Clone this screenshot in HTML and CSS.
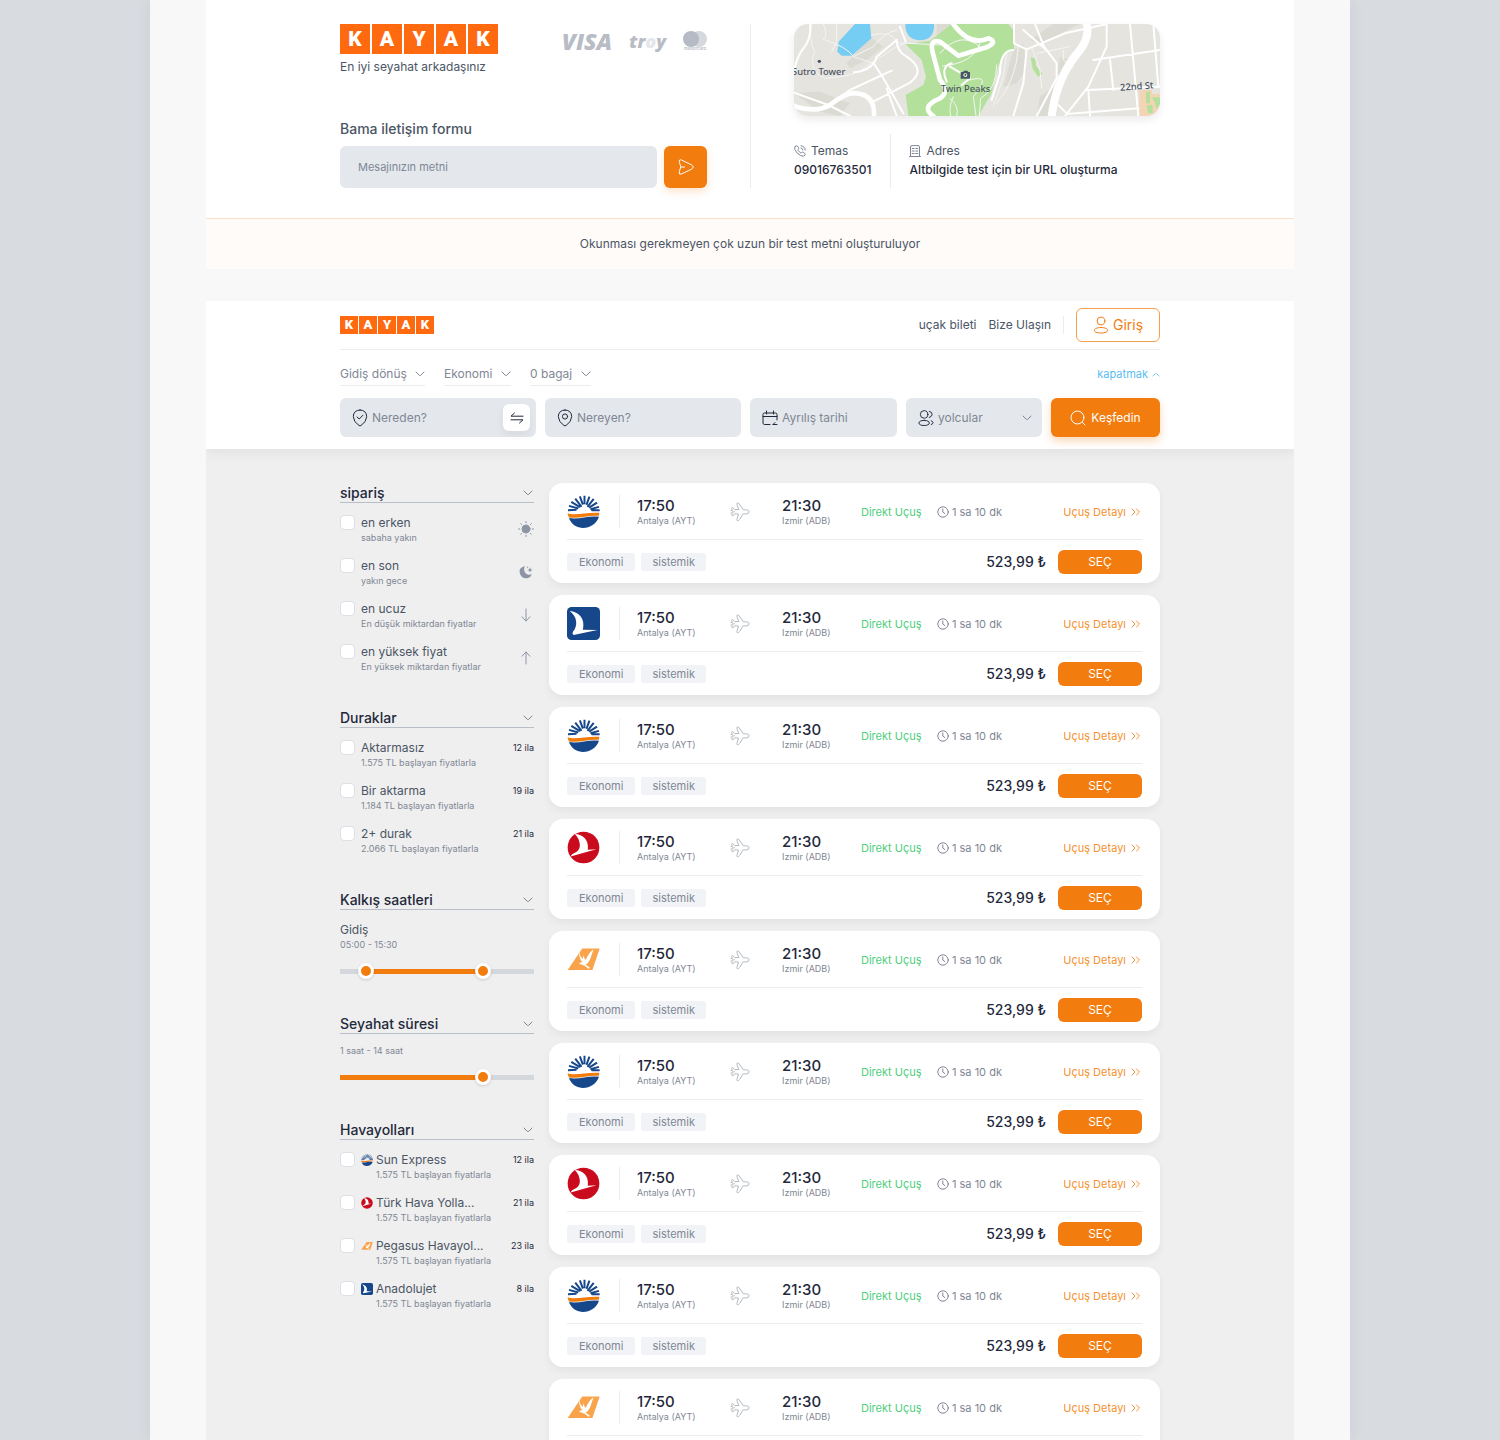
FILE: index.html
```html
<!DOCTYPE html>
<html lang="tr">
<head>
<meta charset="utf-8">
<meta name="viewport" content="width=device-width, initial-scale=1">
<title>KAYAK</title>
<link rel="stylesheet" href="styles.css">
</head>
<body>
<svg class="sprite" aria-hidden="true">
  <symbol id="chevron" viewBox="0 0 10 6"><path d="M1 1 4.3 4.3Q5 5 5.7 4.3L9 1"/></symbol>
  <symbol id="chevron-up" viewBox="0 0 10 6"><path d="M1 5 4.3 1.7Q5 1 5.7 1.7L9 5"/></symbol>
  <symbol id="double" viewBox="0 0 10 8"><path d="M1 1l3 3-3 3M5.500 1l3 3-3 3"/></symbol>
  <symbol id="clock" viewBox="0 0 12 12"><circle cx="6" cy="6" r="5.2"/><path d="M5.800 3v3l2 1.500"/></symbol>
  <symbol id="plane" viewBox="0 0 20 20"><path d="M8.700 7.500 6.900 2.300Q6.600.8 7.900.9q.9.100 1.500 1.200L13.100 7.800h3.700q2.200.3 2.200 2t-2.200 2.100h-3.700l-3.700 5.700q-.8 1.300-1.700 1.200-1.200-.1-.8-1.500l1.700-5.200-4-.2-1.500 2-.3 0q-1.300 0-1-1.200l.6-1.700-1.500-.1M1 8.500l1.400-.1-.7-1.900q-.2-1 1-1l1.900 2.100 4.100-.1M2.500 9.900h2"/></symbol>
  <symbol id="sun-express" viewBox="0 0 100 100">
    <path fill="none" stroke="#17478b" stroke-width="6" d="M3 46l26-1M6 33l28 8M13 21l26 16M25 11l19 25M39 4l9 25M53 2v26M68 5l-9 25M81 12 62 36M91 23 67 38M97 36l-26 7M99 46H74"/>
    <path fill="#f07c0e" d="M2 55C25 64 60 51 98 54l-1 9C63 60 40 73 6 68Q2 62 2 55Z"/>
    <path fill="#17478b" d="M6 70C40 75 64 61 97 66 83 109 20 112 6 70Z"/>
  </symbol>
  <symbol id="turkish" viewBox="0 0 100 100">
    <circle cx="50" cy="50" r="48" fill="#ca0a1d"/>
    <path fill="#fff" d="M24 9C48 10 67 26 63 57L89 55 11 77Q13 70 24 66C44 59 44 30 24 9Z"/>
  </symbol>
  <symbol id="anadolu" viewBox="0 0 100 100">
    <rect width="100" height="100" rx="14" fill="#17478b"/>
    <path fill="#fff" d="M8 12C36 15 56 34 48 69L92 70 20 85Q14 81 18 75C34 57 31 28 8 12Z"/>
  </symbol>
  <symbol id="pegasus" viewBox="0 0 100 100">
    <path fill="#f9a44b" d="M46 17H99L77 82H2Z"/>
    <path fill="#fff" d="M37 20q0 20 10 28L51 37q1 12 6 14Q67 27 81 20 76 30 72 45 63 65 56 66l13 8-3 5-12-10-17-6q3-7 10-4Q34 46 37 20Z"/>
  </symbol>
</svg>

<main class="board">
  <footer class="contact">
    <div class="contact-grid">
      <section class="contact-left">
        <div class="brand-row">
          <div>
            <a class="kayak kayak-large" href="#" aria-label="KAYAK"><span>K</span><span>A</span><span>Y</span><span>A</span><span>K</span></a>
            <p class="slogan">En iyi seyahat arkadaşınız</p>
          </div>
          <div class="payments">
            <span class="visa">VISA</span>
            <span class="troy">tr<span>o</span>y</span>
            <svg class="mastercard" viewBox="0 0 24 20" aria-label="mastercard"><circle cx="16" cy="8" r="8" fill="#d5d8dd"/><circle cx="8" cy="8" r="8" fill="#b5bac4"/><text x="12" y="19" text-anchor="middle">mastercard</text></svg>
          </div>
        </div>
        <form class="message">
          <label for="message">Bama iletişim formu</label>
          <div class="message-row">
            <input id="message" type="text" placeholder="Mesajınızın metni">
            <button type="button" aria-label="Gönder"><svg viewBox="0 0 16 16"><path d="M1.300 3.200Q.6.100 3.500 1L13.500 5.800Q17 8 13.500 10.200L3.500 15Q.6 15.900 1.300 12.800L2.700 8ZM2.700 8H6.500"/></svg></button>
          </div>
        </form>
      </section>
      <section class="contact-right">
        <svg class="map" viewBox="162 42 1098 276" preserveAspectRatio="xMidYMid slice" role="img" aria-label="Harita">
          <rect x="162" y="42" width="1098" height="276" fill="#e5e4df"/>
          <g fill="#dbdbd3"><path d="M392 80 430 110 380 150 330 175 320 160Z"/><path d="M162 250 240 245 330 280 300 318 240 305Z"/><path d="M590 42 640 42 620 80 590 90Z"/><path d="M820 120 850 100 860 180 830 220 790 230Z"/><path d="M940 42 1020 42 900 100 870 90Z"/><path d="M960 140 990 150 970 200 950 190Z"/><path d="M900 260 940 230 930 318 890 318Z"/></g>
          <path fill="#b3e19c" d="M635 42H805L822 62V120Q780 130 770 190L755 250 715 318H505L497 255 550 225 558 200 545 150 497 103 570 92 600 70Z"/>
          <path fill="#b3e19c" d="M872 142l14 4 2 22 20 24-14 8-16-24Z"/>
          <path fill="#76cdf4" d="M345 42H390L394 85 335 137H305L292 125 296 95Z"/>
          <path fill="#76cdf4" d="M496 42H582Q585 90 538 91 496 88 496 42Z"/>
          <path fill="#f3d5b5" d="M1198 240h38v12h24v66h-62Z"/><path fill="#b3e19c" d="M1218 245h12v35h-12ZM1236 262h24v20l-10 15-6-20ZM1220 286h18v24h-14Z"/>
          <g class="lanes"><path d="M215 42Q205 95 225 125 210 150 225 185L255 205Q350 200 385 165L470 110 497 100"/><path d="M250 42Q265 75 250 90M290 42V95L275 125M255 90Q320 110 340 140L400 110Q430 70 470 60M395 75Q460 60 470 98L600 105M340 140 400 160M600 130Q660 60 720 110M608 168Q700 160 720 100M690 210Q760 190 700 260L708 318M718 318 722 265Q770 240 770 165M630 265Q660 290 650 318M640 260Q625 290 632 318M800 130 790 200 760 290M835 110Q830 210 770 280M875 110 900 180 905 235M970 120V150L1000 175M890 130 990 110"/></g>
          <g class="roads"><path d="M210 42Q215 85 190 115 170 140 162 185M162 248 265 285 330 318M265 285 330 240 455 182M342 187Q400 180 410 140L470 90M470 90Q470 125 500 140 560 180 510 218L400 275M400 158 430 205 490 310M440 235 470 318M480 50 497 95M635 160Q600 170 620 215M630 170 690 205 665 225M822 42V100L860 118 975 70 1100 42M885 42 912 110 950 160V205L890 318M850 60 925 125M1100 42V110L1045 230 975 318M1060 150 1260 120M1110 150 1120 240M1040 240 1260 230M1170 42 1195 318M1240 42 1255 230M980 312 1195 295M1045 240 1050 318M955 285 980 310M820 120Q780 120 780 190L755 270M860 118 850 220 820 318"/></g>
          <g class="avenues"><path d="M162 288Q230 310 270 285 320 245 350 250 405 255 402 318"/><path d="M640 42Q690 110 745 85 775 95 740 112L655 137 600 95Q565 85 580 135L600 210Q630 245 600 265 540 290 580 318"/></g>
          <path class="highway" d="M1040 42Q1050 80 1020 120 950 200 935 318"/>
          <circle cx="238" cy="154" r="5" fill="#4b5565"/>
          <path fill="#4b5565" d="M662 186h7l3-4h10l3 4h5v20h-28ZM676 189a6 6 0 1 0 .1 0Z"/><circle cx="676" cy="195" r="3" fill="#4b5565"/>
          <g class="places"><text x="156" y="195">Sutro Tower</text><text x="602" y="245">Twin Peaks</text><text x="1141" y="242" transform="rotate(-4 1141 242)">22nd St</text></g>
        </svg>
        <div class="details">
          <div class="detail">
            <h3><svg viewBox="0 0 12 12"><path d="M1.200 1.500Q2.500.1 3.500 1.100L4.700 2.800Q5 3.500 4.200 4.300q-.5.600 0 1.300l2 2q.8.600 1.400 0 .8-.8 1.500-.4l1.700 1.200q1 .7.100 1.800-1.300 1.900-4.300.3Q2.400 8.300.8 4.500.3 2.600 1.200 1.500ZM7 3q1.800.2 2 2M7 .8Q11 1.200 11.200 5"/></svg>Temas</h3>
            <p>09016763501</p>
          </div>
          <div class="detail">
            <h3><svg viewBox="0 0 12 12"><path d="M.5 11.500h11M1.500 11.500V2Q1.500.6 3 .6h6q1.500 0 1.500 1.400v9.500M3.200 3.500h2M3.200 6h2M3.200 8.500h2M6.800 3.500h2M6.800 6h2M6.800 8.500h2"/></svg>Adres</h3>
            <p>Altbilgide test için bir URL oluşturma</p>
          </div>
        </div>
      </section>
    </div>
    <p class="notice">Okunması gerekmeyen çok uzun bir test metni oluşturuluyor</p>
  </footer>

  <div class="app">
    <header class="header">
      <div class="container">
        <div class="topbar">
          <a class="kayak kayak-small" href="#" aria-label="KAYAK"><span>K</span><span>A</span><span>Y</span><span>A</span><span>K</span></a>
          <nav>
            <a href="#">uçak bileti</a>
            <a href="#">Bize Ulaşın</a>
            <span class="separator"></span>
            <button class="login" type="button"><svg viewBox="0 0 16 18"><circle cx="8" cy="5" r="3.900"/><path d="M8 11.500c9 0 9 5.500 0 5.500s-9-5.500 0-5.500Z"/></svg>Giriş</button>
          </nav>
        </div>
        <div class="options">
          <div class="option"><select aria-label="Yolculuk türü"><option>Gidiş dönüş</option></select><svg class="chevron"><use href="#chevron"/></svg></div>
          <div class="option"><select aria-label="Sınıf"><option>Ekonomi</option></select><svg class="chevron"><use href="#chevron"/></svg></div>
          <div class="option"><select aria-label="Bagaj"><option>0 bagaj</option></select><svg class="chevron"><use href="#chevron"/></svg></div>
          <button class="collapse" type="button">kapatmak<svg><use href="#chevron-up"/></svg></button>
        </div>
        <form class="search">
          <div class="field">
            <svg viewBox="0 0 16 18"><path d="M8 1Q14.500 1.300 14.700 7.500 14.500 13 9 16.500 8 17.200 7 16.500 1.500 13 1.300 7.500 1.500 1.300 8 1ZM5 8l2.200 2L11 6.200"/></svg>
            <input type="text" placeholder="Nereden?" aria-label="Nereden">
            <button class="swap" type="button" aria-label="Değiştir"><svg viewBox="0 0 14 12"><path d="M13 4.200H1L4.500 1M1 7.800h12L9.500 11"/></svg></button>
          </div>
          <div class="field">
            <svg viewBox="0 0 16 18"><path d="M8 1Q14.500 1.300 14.700 7.500 14.500 13 9 16.500 8 17.200 7 16.500 1.500 13 1.300 7.500 1.500 1.300 8 1Z"/><circle cx="8" cy="7.500" r="2.600"/></svg>
            <input type="text" placeholder="Nereyen?" aria-label="Nereye">
          </div>
          <div class="field">
            <svg viewBox="0 0 16 16"><path d="M8 14.500H2.500Q1 14.500 1 13V4.500Q1 3 2.500 3h11Q15 3 15 4.500V10M1 6.500h14M4.500 1v3M11.500 1v3M15 14.500h-4l2-2M11 14.500h3.500"/></svg>
            <input type="text" placeholder="Ayrılış tarihi" aria-label="Ayrılış tarihi">
          </div>
          <div class="field">
            <svg viewBox="0 0 17 18"><circle cx="6.500" cy="5.200" r="4"/><path d="M6.500 11.500c7.500 0 7.500 5.500 0 5.500s-7.500-5.500 0-5.500ZM12 2q3 .5 3 3t-3 3.500M14 12q2 .6 2 2t-2 2"/></svg>
            <select aria-label="Yolcular"><option>yolcular</option></select>
            <svg class="chevron"><use href="#chevron"/></svg>
          </div>
          <button class="explore" type="button"><svg viewBox="0 0 16 16"><circle cx="7.500" cy="7.500" r="6.500"/><path d="M12.500 12.500 15 15"/></svg>Keşfedin</button>
        </form>
      </div>
    </header>

    <div class="container results">
      <aside class="filters">
        <section>
          <h2><button type="button">sipariş<svg class="chevron"><use href="#chevron"/></svg></button></h2>
          <label class="filter"><input type="checkbox"><span class="name">en erken</span><svg class="side" viewBox="0 0 16 16"><circle cx="8" cy="8" r="4" fill="currentColor"/><path d="M8 .5v1.300M8 14.200v1.300M.5 8h1.300M14.200 8h1.300M2.700 2.700l.9.900M12.400 12.400l.9.900M2.700 13.300l.9-.9M12.400 3.600l.9-.9"/></svg><small>sabaha yakın</small></label>
          <label class="filter"><input type="checkbox"><span class="name">en son</span><svg class="side" viewBox="0 0 16 16"><path fill="currentColor" stroke="none" d="M7 2Q-.5 4 2.300 10.500 5 15.500 10 14q3-1 4-4-3 1.600-5.500 0Q4.500 7 7 2ZM12 3.500l.8 1.700 1.700.8-1.700.8-.8 1.700-.8-1.700L9.500 6l1.700-.8ZM9.500 2l.3.900.9.300-.9.300-.3.900-.3-.9-.9-.3.900-.3Z"/></svg><small>yakın gece</small></label>
          <label class="filter"><input type="checkbox"><span class="name">en ucuz</span><svg class="side" viewBox="0 0 16 16"><path d="M8 2v12M4 9.800 8 14l4-4.200"/></svg><small>En düşük miktardan fiyatlar</small></label>
          <label class="filter"><input type="checkbox"><span class="name">en yüksek fiyat</span><svg class="side" viewBox="0 0 16 16"><path d="M8 14V2M4 6.200 8 2l4 4.200"/></svg><small>En yüksek miktardan fiyatlar</small></label>
        </section>
        <section>
          <h2><button type="button">Duraklar<svg class="chevron"><use href="#chevron"/></svg></button></h2>
          <label class="filter"><input type="checkbox"><span class="name">Aktarmasız</span><span class="count">12 ila</span><small>1.575 TL başlayan fiyatlarla</small></label>
          <label class="filter"><input type="checkbox"><span class="name">Bir aktarma</span><span class="count">19 ila</span><small>1.184 TL başlayan fiyatlarla</small></label>
          <label class="filter"><input type="checkbox"><span class="name">2+ durak</span><span class="count">21 ila</span><small>2.066 TL başlayan fiyatlarla</small></label>
        </section>
        <section>
          <h2><button type="button">Kalkış saatleri<svg class="chevron"><use href="#chevron"/></svg></button></h2>
          <p class="range-name">Gidiş</p>
          <p class="range-value">05:00 - 15:30</p>
          <div class="range" style="--from: 13%; --to: 74%">
            <input type="range" value="10" aria-label="En erken kalkış">
            <input type="range" value="76" aria-label="En geç kalkış">
          </div>
        </section>
        <section>
          <h2><button type="button">Seyahat süresi<svg class="chevron"><use href="#chevron"/></svg></button></h2>
          <p class="range-value">1 saat - 14 saat</p>
          <div class="range" style="--from: 0%; --to: 74%">
            <input type="range" value="76" aria-label="Seyahat süresi">
          </div>
        </section>
        <section>
          <h2><button type="button">Havayolları<svg class="chevron"><use href="#chevron"/></svg></button></h2>
          <label class="filter airline"><input type="checkbox"><svg class="mini"><use href="#sun-express"/></svg><span class="name">Sun Express</span><span class="count">12 ila</span><small>1.575 TL başlayan fiyatlarla</small></label>
          <label class="filter airline"><input type="checkbox"><svg class="mini"><use href="#turkish"/></svg><span class="name">Türk Hava Yolla...</span><span class="count">21 ila</span><small>1.575 TL başlayan fiyatlarla</small></label>
          <label class="filter airline"><input type="checkbox"><svg class="mini"><use href="#pegasus"/></svg><span class="name">Pegasus Havayol...</span><span class="count">23 ila</span><small>1.575 TL başlayan fiyatlarla</small></label>
          <label class="filter airline"><input type="checkbox"><svg class="mini"><use href="#anadolu"/></svg><span class="name">Anadolujet</span><span class="count">8 ila</span><small>1.575 TL başlayan fiyatlarla</small></label>
        </section>
      </aside>

      <div class="flights">
        <article class="flight">
          <div class="route">
            <div class="carrier"><svg><use href="#sun-express"/></svg></div>
            <div class="stop"><b>17:50</b><small>Antalya (AYT)</small></div>
            <svg class="plane"><use href="#plane"/></svg>
            <div class="stop"><b>21:30</b><small>Izmir (ADB)</small></div>
            <span class="direct">Direkt Uçuş</span>
            <span class="duration"><svg><use href="#clock"/></svg>1 sa 10 dk</span>
            <a href="#">Uçuş Detayı<svg><use href="#double"/></svg></a>
          </div>
          <div class="fare"><span class="tag">Ekonomi</span><span class="tag">sistemik</span><strong>523,99 ₺</strong><button type="button">SEÇ</button></div>
        </article>
        <article class="flight">
          <div class="route">
            <div class="carrier"><svg><use href="#anadolu"/></svg></div>
            <div class="stop"><b>17:50</b><small>Antalya (AYT)</small></div>
            <svg class="plane"><use href="#plane"/></svg>
            <div class="stop"><b>21:30</b><small>Izmir (ADB)</small></div>
            <span class="direct">Direkt Uçuş</span>
            <span class="duration"><svg><use href="#clock"/></svg>1 sa 10 dk</span>
            <a href="#">Uçuş Detayı<svg><use href="#double"/></svg></a>
          </div>
          <div class="fare"><span class="tag">Ekonomi</span><span class="tag">sistemik</span><strong>523,99 ₺</strong><button type="button">SEÇ</button></div>
        </article>
        <article class="flight">
          <div class="route">
            <div class="carrier"><svg><use href="#sun-express"/></svg></div>
            <div class="stop"><b>17:50</b><small>Antalya (AYT)</small></div>
            <svg class="plane"><use href="#plane"/></svg>
            <div class="stop"><b>21:30</b><small>Izmir (ADB)</small></div>
            <span class="direct">Direkt Uçuş</span>
            <span class="duration"><svg><use href="#clock"/></svg>1 sa 10 dk</span>
            <a href="#">Uçuş Detayı<svg><use href="#double"/></svg></a>
          </div>
          <div class="fare"><span class="tag">Ekonomi</span><span class="tag">sistemik</span><strong>523,99 ₺</strong><button type="button">SEÇ</button></div>
        </article>
        <article class="flight">
          <div class="route">
            <div class="carrier"><svg><use href="#turkish"/></svg></div>
            <div class="stop"><b>17:50</b><small>Antalya (AYT)</small></div>
            <svg class="plane"><use href="#plane"/></svg>
            <div class="stop"><b>21:30</b><small>Izmir (ADB)</small></div>
            <span class="direct">Direkt Uçuş</span>
            <span class="duration"><svg><use href="#clock"/></svg>1 sa 10 dk</span>
            <a href="#">Uçuş Detayı<svg><use href="#double"/></svg></a>
          </div>
          <div class="fare"><span class="tag">Ekonomi</span><span class="tag">sistemik</span><strong>523,99 ₺</strong><button type="button">SEÇ</button></div>
        </article>
        <article class="flight">
          <div class="route">
            <div class="carrier"><svg><use href="#pegasus"/></svg></div>
            <div class="stop"><b>17:50</b><small>Antalya (AYT)</small></div>
            <svg class="plane"><use href="#plane"/></svg>
            <div class="stop"><b>21:30</b><small>Izmir (ADB)</small></div>
            <span class="direct">Direkt Uçuş</span>
            <span class="duration"><svg><use href="#clock"/></svg>1 sa 10 dk</span>
            <a href="#">Uçuş Detayı<svg><use href="#double"/></svg></a>
          </div>
          <div class="fare"><span class="tag">Ekonomi</span><span class="tag">sistemik</span><strong>523,99 ₺</strong><button type="button">SEÇ</button></div>
        </article>
        <article class="flight">
          <div class="route">
            <div class="carrier"><svg><use href="#sun-express"/></svg></div>
            <div class="stop"><b>17:50</b><small>Antalya (AYT)</small></div>
            <svg class="plane"><use href="#plane"/></svg>
            <div class="stop"><b>21:30</b><small>Izmir (ADB)</small></div>
            <span class="direct">Direkt Uçuş</span>
            <span class="duration"><svg><use href="#clock"/></svg>1 sa 10 dk</span>
            <a href="#">Uçuş Detayı<svg><use href="#double"/></svg></a>
          </div>
          <div class="fare"><span class="tag">Ekonomi</span><span class="tag">sistemik</span><strong>523,99 ₺</strong><button type="button">SEÇ</button></div>
        </article>
        <article class="flight">
          <div class="route">
            <div class="carrier"><svg><use href="#turkish"/></svg></div>
            <div class="stop"><b>17:50</b><small>Antalya (AYT)</small></div>
            <svg class="plane"><use href="#plane"/></svg>
            <div class="stop"><b>21:30</b><small>Izmir (ADB)</small></div>
            <span class="direct">Direkt Uçuş</span>
            <span class="duration"><svg><use href="#clock"/></svg>1 sa 10 dk</span>
            <a href="#">Uçuş Detayı<svg><use href="#double"/></svg></a>
          </div>
          <div class="fare"><span class="tag">Ekonomi</span><span class="tag">sistemik</span><strong>523,99 ₺</strong><button type="button">SEÇ</button></div>
        </article>
        <article class="flight">
          <div class="route">
            <div class="carrier"><svg><use href="#sun-express"/></svg></div>
            <div class="stop"><b>17:50</b><small>Antalya (AYT)</small></div>
            <svg class="plane"><use href="#plane"/></svg>
            <div class="stop"><b>21:30</b><small>Izmir (ADB)</small></div>
            <span class="direct">Direkt Uçuş</span>
            <span class="duration"><svg><use href="#clock"/></svg>1 sa 10 dk</span>
            <a href="#">Uçuş Detayı<svg><use href="#double"/></svg></a>
          </div>
          <div class="fare"><span class="tag">Ekonomi</span><span class="tag">sistemik</span><strong>523,99 ₺</strong><button type="button">SEÇ</button></div>
        </article>
        <article class="flight">
          <div class="route">
            <div class="carrier"><svg><use href="#pegasus"/></svg></div>
            <div class="stop"><b>17:50</b><small>Antalya (AYT)</small></div>
            <svg class="plane"><use href="#plane"/></svg>
            <div class="stop"><b>21:30</b><small>Izmir (ADB)</small></div>
            <span class="direct">Direkt Uçuş</span>
            <span class="duration"><svg><use href="#clock"/></svg>1 sa 10 dk</span>
            <a href="#">Uçuş Detayı<svg><use href="#double"/></svg></a>
          </div>
          <div class="fare"><span class="tag">Ekonomi</span><span class="tag">sistemik</span><strong>523,99 ₺</strong><button type="button">SEÇ</button></div>
        </article>
      </div>
    </div>
  </div>
</main>
</body>
</html>
```
FILE: styles.css
```css
:root {
  --orange: #f27c0e;
  --ink: #1f293b;
  --body: #4b5565;
  --muted: #7f8795;
  --field: #e4e7ec;
  --line: #ebecee;
}

* {
  box-sizing: border-box;
  margin: 0;
}

body {
  background: #d8dce1;
  color: var(--body);
  font-family: Inter, "Liberation Sans", sans-serif;
  font-size: 12px;
  line-height: 18px;
}

button, input, select {
  padding: 0;
  border: 0;
  background: none;
  color: inherit;
  font: inherit;
}

select, input { appearance: none; min-width: 0; }
input::placeholder { color: var(--muted); opacity: 1; }
a { color: inherit; text-decoration: none; }
svg { display: block; flex: none; fill: none; stroke: currentColor; stroke-width: 1; stroke-linecap: round; stroke-linejoin: round; }
.sprite { position: absolute; width: 0; height: 0; }
symbol#sun-express, symbol#turkish, symbol#anadolu, symbol#pegasus { stroke: none; stroke-linecap: butt; }
.chevron { width: 10px; height: 6px; color: var(--muted); }

.board {
  max-width: 1200px;
  height: 100vh;
  margin: 0 auto;
  padding: 0 56px;
  overflow: hidden;
  background: #f8f8f8;
  box-shadow: 0 0 14px rgba(60, 70, 90, 0.08);
}

.container, .contact-grid {
  width: 100%;
  max-width: 820px;
  margin: 0 auto;
}

/* logo */
.kayak { display: flex; font-family: Roboto, sans-serif; font-weight: 900; color: #fff; }
.kayak span { display: grid; place-items: center; background: #ff690f; }
.kayak-large { gap: 2px; font-size: 21px; line-height: 30px; }
.kayak-large span { width: 30px; height: 30px; }
.kayak-small { gap: 1px; font-size: 13px; line-height: 18px; }
.kayak-small span { width: 18px; height: 18px; }

/* contact footer */
.contact { margin-bottom: 32px; background: #fff; }
.contact-grid { display: grid; grid-template-columns: 1fr 1fr; padding: 24px 0 30px; }
.contact-left { display: flex; flex-direction: column; justify-content: space-between; padding-right: 43px; }
.contact-right { padding-left: 43px; border-left: 1px solid var(--line); }
.brand-row { display: flex; justify-content: space-between; }
.slogan { margin-top: 4px; }
.payments { display: flex; align-items: center; gap: 17px; height: 34px; color: #b7bcc5; font-weight: 800; font-style: italic; }
.visa { font-family: "Open Sans", sans-serif; font-size: 23px; }
.troy { font-family: "Open Sans", sans-serif; font-size: 18px; }
.troy span { color: #e4e6ea; }
.mastercard { width: 24px; height: 20px; stroke: none; }
.mastercard text { fill: #b7bcc5; font-size: 4px; font-style: normal; font-weight: 600; }
.message label { display: block; font-size: 14px; font-weight: 500; }
.message-row { display: flex; gap: 7px; margin-top: 8px; }
.message input { flex: 1; height: 42px; padding: 0 18px; border-radius: 6px; background: var(--field); font-size: 11px; }
.message button { display: grid; place-items: center; width: 43px; height: 42px; border-radius: 6px; background: var(--orange); color: #fff; box-shadow: 0 4px 8px rgba(242, 124, 14, 0.2); }
.message button svg { width: 16px; height: 16px; }

.map { width: 100%; height: 92px; border-radius: 14px; box-shadow: 0 4px 8px rgba(0, 0, 0, 0.08); stroke: none; }
.lanes, .roads, .avenues, .highway { fill: none; stroke: #fff; }
.lanes { stroke-width: 3; stroke: #f4f4f4; }
.roads { stroke-width: 6; }
.avenues { stroke-width: 14; }
.highway { stroke-width: 24; }
.places { fill: #4b5565; font-family: "Noto Sans", sans-serif; font-size: 28px; font-weight: 500; }

.details { display: flex; margin-top: 18px; }
.detail { padding-top: 8px; height: 54px; }
.detail + .detail { margin-left: 19px; padding-left: 18px; border-left: 1px solid var(--line); }
.detail h3 { display: flex; align-items: center; gap: 5px; font-size: 12px; font-weight: 400; }
.detail h3 svg { width: 12px; height: 12px; color: var(--muted); }
.detail p { line-height: 20px; color: var(--ink); font-weight: 500; }
.notice { padding: 16px; border-top: 1px solid #fde0c8; background: #fffbf8; text-align: center; }

/* search header */
.app { overflow: hidden; background: #efefef; }
.header { background: #fff; padding-bottom: 12px; box-shadow: 0 4px 12px rgba(0, 0, 0, 0.06); }
.topbar { display: flex; align-items: center; justify-content: space-between; height: 49px; border-bottom: 1px solid var(--line); }
.topbar nav { display: flex; align-items: center; gap: 12px; }
.separator { width: 1px; height: 18px; background: var(--line); }
.login { display: flex; align-items: center; justify-content: center; gap: 4px; width: 84px; height: 34px; border: 1px solid #f5a050; border-radius: 6px; color: var(--orange); font-size: 14px; }
.login svg { width: 16px; height: 18px; }
.options { display: flex; align-items: center; gap: 19px; padding: 12px 0; color: var(--muted); }
.option { display: flex; align-items: center; gap: 8px; height: 24px; border-bottom: 1px solid var(--line); }
.collapse { display: flex; align-items: center; gap: 4px; margin-left: auto; color: #5bbdf0; font-size: 11px; }
.collapse svg { width: 8px; height: 5px; }
.search { display: grid; grid-template-columns: 196fr 196fr 147fr 136fr 109fr; gap: 9px; }
.field { display: flex; align-items: center; gap: 4px; min-width: 0; height: 39px; padding: 0 6px 0 12px; border-radius: 6px; background: var(--field); color: var(--ink); }
.field > svg { width: 16px; height: 18px; }
.field input, .field select { flex: 1; width: 0; color: var(--muted); }
.field > .chevron { width: 10px; height: 6px; margin-right: 4px; color: var(--muted); }
.swap { display: grid; place-items: center; width: 27px; height: 27px; border-radius: 6px; background: #fff; box-shadow: 0 4px 8px rgba(0, 0, 0, 0.06); }
.swap svg { width: 14px; height: 12px; }
.explore { display: flex; align-items: center; justify-content: center; gap: 5px; min-width: 0; border-radius: 6px; background: var(--orange); color: #fff; box-shadow: 0 4px 8px rgba(242, 124, 14, 0.3); }
.explore svg { width: 16px; height: 16px; }

/* results */
.results { display: grid; grid-template-columns: 194px 1fr; gap: 15px; padding: 34px 0; align-items: start; }
.filters { display: grid; gap: 35px; }
.filters h2 { margin-bottom: 11px; border-bottom: 1px solid #b9bfc8; font-size: 14px; line-height: 19px; font-weight: 500; color: var(--ink); }
.filters h2 button { display: flex; align-items: center; justify-content: space-between; width: 100%; padding-right: 1px; }
.filter { display: grid; grid-template-columns: 15px 1fr auto; column-gap: 6px; grid-template-rows: 18px 12px; }
.filter + .filter { margin-top: 13px; }
.filter small { grid-column: 2; color: var(--muted); font-size: 9px; line-height: 12px; white-space: nowrap; }
.filter input { width: 15px; height: 15px; margin-top: 1px; border: 1px solid #dcdfe6; border-radius: 4px; background: #fff; }
.filter input:checked { background: var(--orange); }
.side { width: 16px; height: 16px; grid-column: 3; grid-row: 1 / 3; align-self: center; color: #8d95a5; }
.count { font-size: 9px; color: var(--ink); }
.airline { grid-template-columns: 15px 12px 1fr auto; }
.airline .name { margin-left: -3px; }
.airline small { grid-column: 3; margin-left: -3px; }
.mini { width: 12px; height: 12px; margin-top: 3px; }
.range-value { color: var(--muted); font-size: 9px; line-height: 12px; }
.range { display: grid; height: 16px; margin-top: 12px; background: linear-gradient(to right, #d4d8dc var(--from), var(--orange) var(--from) var(--to), #d4d8dc var(--to)) center / 100% 5px no-repeat; }
.range input { grid-area: 1 / 1; width: 100%; height: 16px; pointer-events: none; }
.range input::-webkit-slider-thumb { appearance: none; width: 16px; height: 16px; border: 3px solid #fff; border-radius: 50%; background: var(--orange); box-shadow: 0 1px 3px rgba(0, 0, 0, 0.15); pointer-events: auto; }

.flights { display: grid; gap: 12px; }
.flight { padding: 12px 18px 9px; border-radius: 14px; background: #fff; box-shadow: 0 4px 8px rgba(0, 0, 0, 0.05); }
.route { display: grid; grid-template-columns: 70px 93px 52px 79px 76px auto 1fr; align-items: center; padding-bottom: 11px; border-bottom: 1px solid var(--line); font-size: 11px; }
.carrier { width: 53px; border-right: 1px solid var(--line); }
.carrier svg { width: 33px; height: 33px; }
.stop b { display: block; color: var(--ink); font-size: 15px; font-weight: 500; line-height: 18px; }
.stop small { display: block; color: var(--muted); font-size: 9px; line-height: 12px; }
.plane { width: 20px; height: 20px; color: #b5bac3; }
.direct { color: #4fce7d; }
.duration { display: flex; align-items: center; gap: 3px; color: var(--muted); }
.duration svg { width: 12px; height: 12px; }
.route a { display: flex; align-items: center; justify-content: flex-end; gap: 5px; padding-right: 1px; color: #f5922f; }
.route a svg { width: 10px; height: 8px; }
.fare { display: flex; align-items: center; gap: 6px; padding-top: 10px; }
.tag { padding: 0 12px; border-radius: 3px; background: #f2f3f7; color: var(--muted); font-size: 11px; }
.tag + .tag { padding: 0 11px; }
.fare strong { margin: 0 6px 0 auto; color: var(--ink); font-size: 14px; font-weight: 500; }
.fare button { width: 84px; height: 24px; border-radius: 6px; background: var(--orange); color: #fff; }
```
